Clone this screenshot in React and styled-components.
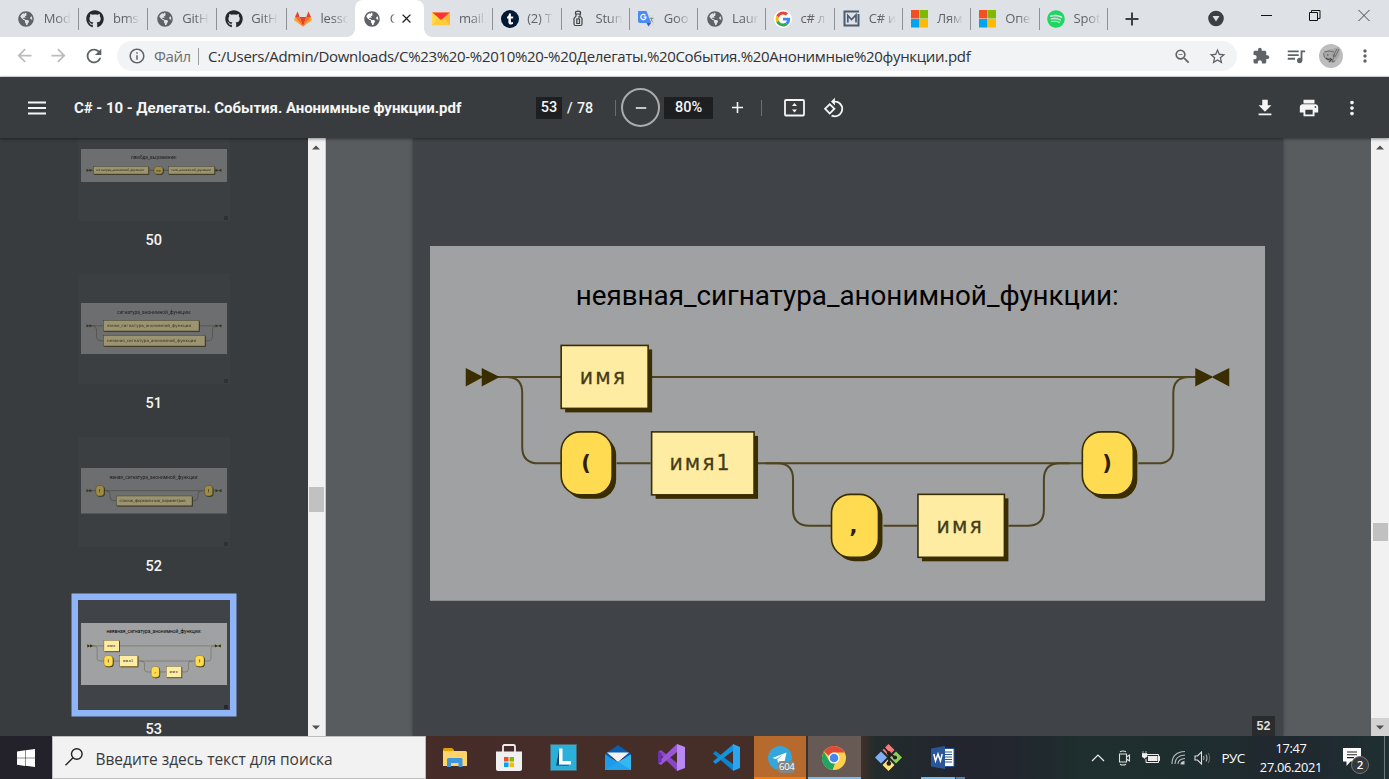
import React from 'react';
import styled, { createGlobalStyle, css } from 'styled-components';
import {
  MdArrowBack, MdArrowForward, MdRefresh, MdInfoOutline, MdZoomOut, MdStarBorder,
  MdExtension, MdQueueMusic, MdMoreVert, MdRemove, MdAdd, MdRotate90DegreesCcw,
  MdFileDownload, MdPrint, MdClose,
} from 'react-icons/md';
import { FaGithub, FaSpotify, FaGlobeAmericas } from 'react-icons/fa';

const Global = createGlobalStyle`
  * { box-sizing: border-box; }
  body { margin: 0; overflow: hidden; }
  svg { display: block; flex: none; }
`;

const ui = `'Open Sans', 'Noto Sans', sans-serif`;
const roboto = `Roboto, 'Noto Sans', sans-serif`;

const Screen = styled.div`
  width: 1389px; height: 779px; display: flex; flex-direction: column;
  overflow: hidden; font-family: ${ui}; white-space: nowrap;
`;

/* ---------- tab strip ---------- */
const TabStrip = styled.div`
  height: 37px; flex: none; display: flex; align-items: stretch;
  background: #dee1e6; padding-left: 9.2px;
`;
const Tab = styled.div`
  width: ${p => p.$w}px; flex: none; position: relative; display: flex; align-items: center;
  padding-left: 8px; color: #5f6368; font-size: 13px; letter-spacing: -0.2px;
  ${p => !p.$active && !p.$last && css`
    &::after { content: ''; position: absolute; right: -0.6px; top: 8px; width: 1px; height: 22px; background: #8d9094; }
  `}
  ${p => p.$active && css`
    background: #fff; border-radius: 8px 8px 0 0;
    &::before, &::after { content: ''; position: absolute; bottom: 0; width: 8px; height: 8px; }
    &::before { left: -8px; background: radial-gradient(circle at 0 0, transparent 7.5px, #fff 8px); }
    &::after { right: -8px; background: radial-gradient(circle at 100% 0, transparent 7.5px, #fff 8px); }
  `}
`;
const Favicon = styled.div`
  width: 18px; height: 18px; flex: none; display: flex; align-items: center; justify-content: center; margin-top: 0.5px;
`;
const TabTitle = styled.span`
  margin-left: 8.6px; width: ${p => p.$w || 27}px; overflow: hidden; line-height: 20px; margin-top: -1px;
  -webkit-mask-image: linear-gradient(90deg, #000 45%, transparent);
  mask-image: linear-gradient(90deg, #000 45%, transparent);
`;
const TabClose = styled.span`margin-left: 4px; color: #202124;`;
const StripPlus = styled.div`margin: 0 0 0 18px; display: flex; align-items: center;`;
const StripEnd = styled.div`
  margin-left: auto; display: flex; align-items: flex-start; padding: 7px 19px 0 0; gap: 37px;
`;

const Globe = () => <FaGlobeAmericas size={16} color="#5f6368" />;
const GitLab = () => (
  <svg width="18" height="18" viewBox="0 0 18 18">
    <path d="M9 16.800 12.300 7H5.700z" fill="#e24329" /><path d="M9 16.800 5.700 7H1z" fill="#fc6d26" />
    <path d="M9 16.800 12.300 7H17z" fill="#fc6d26" /><path d="M1 7 .2 10.200 9 16.800z" fill="#fca326" />
    <path d="M17 7l.8 3.200L9 16.800z" fill="#fca326" /><path d="M1 7 3.600 1.400 5.700 7z" fill="#e24329" />
    <path d="M17 7l-2.600-5.600L12.300 7z" fill="#e24329" />
  </svg>
);
const YandexMail = () => (
  <svg width="18" height="14" viewBox="0 0 18 14">
    <path d="M0 .5h18v12.800H0z" fill="#ffcc3d" /><path d="M0 .5 9 8l9-7.500z" fill="#f33" />
    <path d="M0 .5v12.800L6 5.400z" fill="#ffdb4d" /><path d="M18 .5v12.800L12 5.400z" fill="#fcb632" />
  </svg>
);
const Tumblr = () => (
  <svg width="18" height="18" viewBox="0 0 18 18">
    <circle cx="9" cy="9" r="9" fill="#001935" />
    <path d="M9.900 3.600v3h2.300v2H9.900v2.700c0 1 .7 1.400 2.100.8v2c-2.600 1-4.600.1-4.600-2.200V8.600H6V6.900c1.200-.4 1.800-1.500 2-3.300z" fill="#fff" />
  </svg>
);
const Bottle = () => (
  <svg width="14" height="18" viewBox="0 0 14 18" fill="none" stroke="#444" strokeWidth="1.200">
    <path d="M4.500 4V2.200Q4.500 1.200 7 1.200t2.500 1V4zM5 4.500v1.500L3 8.500V14q0 1.500 1.500 1.500h5Q11 15.500 11 14V8.500L9 6V4.500" />
    <path d="M8 6v3H5.800v4.500h2.700V9" />
  </svg>
);
const Translate = () => (
  <svg width="18" height="18" viewBox="0 0 18 18">
    <path d="M7 5h9a1 1 0 0 1 1 1v9a1 1 0 0 1-1 1h-6z" fill="#dcdcdc" />
    <path d="M1.500 1h8l4.500 12H3a2 2 0 0 1-2-2V1.500z" fill="#4a8af4" />
    <path d="M9.500 13H14l-2.500 3.500z" fill="#3a5bc7" />
    <path d="M8.400 5.300A2.600 2.600 0 1 0 9 7.200H6.500" fill="none" stroke="#fff" strokeWidth="1.200" />
    <path d="M12.500 8.500h4M14.300 7.500c1 2-.3 4-1.300 4.500M14 10l2.200 2" fill="none" stroke="#7c8a91" strokeWidth=".9" />
  </svg>
);
const Google = () => (
  <svg width="18" height="18" viewBox="-5 -5 58 58">
    <circle cx="24" cy="24" r="29" fill="#fff" />
    <path fill="#EA4335" d="M24 9.500c3.500 0 6.700 1.200 9.200 3.600l6.900-6.900C35.900 2.400 30.500 0 24 0 14.600 0 6.500 5.400 2.600 13.200l8 6.200C12.400 13.700 17.700 9.500 24 9.500z" />
    <path fill="#4285F4" d="M47 24.600c0-1.600-.2-3.100-.4-4.600H24v9h12.900c-.6 3-2.300 5.500-4.800 7.200l7.700 6C44.400 38 47 31.800 47 24.600z" />
    <path fill="#FBBC05" d="M10.500 28.600a14.500 14.500 0 0 1 0-9.200l-8-6.200a24 24 0 0 0 0 21.600z" />
    <path fill="#34A853" d="M24 48c6.500 0 11.900-2.100 15.900-5.800l-7.700-6c-2.200 1.500-4.900 2.300-8.200 2.300-6.300 0-11.600-4.200-13.500-9.900l-8 6.200C6.500 42.600 14.600 48 24 48z" />
  </svg>
);
const Metanit = () => (
  <svg width="17" height="17" viewBox="0 0 17 17" fill="none" stroke="#4b5d70" strokeWidth="2">
    <path d="M16 1.500H1.500v14h14V4" /><path d="M4.800 12.500V5.500l3.700 4 4.500-4.700v7.700" strokeWidth="1.700" />
  </svg>
);
const Microsoft = ({ size = 17.500 }) => (
  <svg width={size} height={size} viewBox="0 0 17 17">
    <path d="M0 0h8.200v8.200H0z" fill="#f25022" /><path d="M8.800 0H17v8.200H8.800z" fill="#7fba00" />
    <path d="M0 8.800h8.200V17H0z" fill="#00a4ef" /><path d="M8.800 8.800H17V17H8.800z" fill="#ffb900" />
  </svg>
);

const tabs = [
  { t: 'Mod', i: <Globe /> }, { t: 'bmst', i: <FaGithub size={18} color="#24292e" /> },
  { t: 'GitH', i: <Globe /> }, { t: 'GitH', i: <FaGithub size={18} color="#24292e" /> },
  { t: 'lesso', i: <GitLab /> }, { t: 'C', i: <Globe />, active: true },
  { t: 'mail.', i: <YandexMail /> }, { t: '(2) T', i: <Tumblr /> }, { t: 'Stun', i: <Bottle /> },
  { t: 'Goo', i: <Translate /> }, { t: 'Laun', i: <Globe /> }, { t: 'c# л', i: <Google /> },
  { t: 'C# и', i: <Metanit /> }, { t: 'Лям', i: <Microsoft /> }, { t: 'Опе', i: <Microsoft /> },
  { t: 'Spot', i: <FaSpotify size={18} color="#1ed760" /> },
];

/* ---------- address bar ---------- */
const AddressRow = styled.div`
  height: 40px; flex: none; display: flex; align-items: center; background: #fff;
  border-bottom: 1.500px solid #dadce0; padding: 0 14px 1px 13.500px; color: #5f6368;
`;
const NavButtons = styled.div`display: flex; gap: 13.500px; width: 103.500px;`;
const Dim = styled.span`color: #babcbe; display: flex;`;
const Omnibox = styled.div`
  width: 1120px; height: 30px; border-radius: 15px; background: #f1f3f4;
  display: flex; align-items: center; padding: 0 10px 0 11px;
`;
const Scheme = styled.span`margin-left: 8px; font-size: 15px; width: 44px; letter-spacing: -0.450px; color: #6b6f73;`;
const Bar = styled.span`width: 1px; height: ${p => p.$h}px; background: ${p => p.$c};`;
const Url = styled.span`margin-left: 9px; font-size: 15px; letter-spacing: -0.316px; color: #303236;`;
const OmniEnd = styled.div`margin-left: auto; display: flex; gap: 16px; align-items: center;`;
const Extensions = styled.div`margin-left: auto; display: flex; align-items: center;`;
const Gap = styled.span`width: ${p => p.$w}px; flex: none;`;

/* ---------- viewer header ---------- */
const PdfHeader = styled.div`
  height: 61px; flex: none; display: flex; align-items: center; background: #383c3e;
  color: #f5f5f5; font-family: ${roboto}; padding: 0 26px 0 26px; z-index: 2;
  box-shadow: 0 1px 3px rgba(0,0,0,.45);
`;
const DocTitle = styled.div`
  margin-left: 26px; width: 462px; font-size: 15px; font-weight: 700; letter-spacing: -0.030px;
`;
const Field = styled.div`
  width: ${p => p.$w}px; height: 22px; background: #1d1f21; font-size: 14.500px; font-weight: 500;
  display: flex; align-items: center; justify-content: center;
`;
const Total = styled.span`margin-left: 5px; width: 48px; font-size: 14.300px; word-spacing: 1px; letter-spacing: -0.100px; font-weight: 500;`;
const ZoomOut = styled.div`
  width: 39px; height: 39px; border: 2px solid #a9abac; border-radius: 50%; margin: 0 4px 0 5px;
  display: flex; align-items: center; justify-content: center;
`;
const HeaderEnd = styled.div`margin-left: auto; display: flex; align-items: center; gap: 21.500px;`;

/* ---------- body ---------- */
const Body = styled.div`height: 598px; flex: none; display: flex; overflow: hidden;`;
const Sidebar = styled.div`width: 307.500px; background: #383c3e; overflow: hidden;`;
const ThumbList = styled.div`display: flex; flex-direction: column; align-items: center; margin-top: -27.500px;`;
const Thumb = styled.div`height: 163px; flex: none; display: flex; flex-direction: column; align-items: center;`;
const ThumbPage = styled.div`
  width: 152px; height: 110.500px; flex: none; position: relative; background: #404347; padding: ${p => p.$top}px 3px 0;
  opacity: ${p => (p.$on ? 1 : 0.5)};
  ${p => p.$on && css`box-shadow: 0 0 0 6.500px #8fb4f8;`}
`;
const ThumbMark = styled.div`position: absolute; right: 1.500px; bottom: 1.500px; width: 4.500px; height: 4px; background: #26282a;`;
const ThumbLabel = styled.div`margin-top: 10px; font: 500 14.500px/19px ${roboto}; color: #f5f5f5;`;

const Track = styled.div`
  width: 18px; flex: none; background: #f1f1f1; display: flex; flex-direction: column; align-items: center;
  border: solid #c9c9c9; border-width: 0 ${p => (p.$edge ? 1 : 0)}px 0 0;
`;
const ScrollButton = styled.div`
  width: 100%; height: 18px; display: flex; align-items: center; justify-content: center;
  background: ${p => (p.$hot ? '#d2d2d2' : 'transparent')};
`;
const ScrollThumb = styled.div`
  width: 15px; height: ${p => p.$h}px; margin: ${p => p.$y}px 0 auto; background: #c1c1c1;
`;
const Arrow = ({ up }) => (
  <svg width="8" height="5" viewBox="0 0 8 5"><path d={up ? 'M0 4.500 4 .5l4 4z' : 'M0 .5l4 4 4-4z'} fill="#505050" /></svg>
);

const Canvas = styled.div`flex: 1; background: #595c5e; display: flex; justify-content: center; align-items: flex-start; padding-right: 0.500px;`;
const Sheet = styled.div`
  width: 870px; height: 598px; background: #404347; position: relative; padding: 108px 0 0 17px;
  box-shadow: 0 0 3px rgba(40,42,44,.7);
`;
const PageBadge = styled.div`
  position: absolute; right: 8px; bottom: 0; width: 23px; height: 20px; background: #292b2d; color: #ddd;
  font: 700 12.500px/20px 'Liberation Sans', Arial, sans-serif; text-align: center;
`;

/* ---------- railroad diagrams ---------- */
const INK = '#3a2e00';
const Node = ({ x, y, w, h, d = 4, s = 1.600, r = 0, bold, children, tx, ty, tw, fs = 21 }) => (
  <g>
    <rect x={x + d} y={y + d} width={w} height={h} rx={r} fill={INK} />
    <rect x={x} y={y} width={w} height={h} rx={r} fill={r ? '#ffdb52' : '#ffeca3'} stroke={INK} strokeWidth={s} />
    <text x={tx} y={ty} fontSize={fs} fontFamily="'DejaVu Sans', sans-serif" fontWeight={bold ? 700 : 400}
      fill={bold ? '#2b2200' : '#453c18'} stroke={bold ? 'none' : '#453c18'} strokeWidth={fs / 70}
      textLength={tw} lengthAdjust="spacing">{children}</text>
  </g>
);
const Title = ({ x, y, w, fs, children }) => (
  <text x={x} y={y} fontSize={fs} fontFamily={roboto} fill="#000" textLength={w} lengthAdjust="spacingAndGlyphs">{children}</text>
);

const ImplicitSignature = ({ width = 835 }) => (
  <svg width={width} height={width * 355 / 835} viewBox="430.500 246 834.500 355">
    <rect x="430" y="246" width="836" height="355" fill="#a0a1a3" />
    <Title x={576} y={305} w={543.500} fs={28}>неявная_сигнатура_анонимной_функции:</Title>
    <g fill="none" stroke="#4f4420" strokeWidth="2">
      <path d="M483 377H1213M617 463.500h34M758 463.500h326M1139 463.500h19q16 0 16-16V393q0-16 16-16h8M499 377h8q15.500 0 15.500 16v54q0 16.500 17 16.500H562" />
      <path d="M766 463.500h12q15.500 0 15.500 16V510q0 16 16.500 16h22M884 526h34M1009 526h19q16.500 0 16.500-16v-30q0-16.500 16-16.500h10" />
    </g>
    <g fill={INK}>
      <path d="M466 368v18.500l17.500-9.500zM482 368v18.500l18-9.500zM1196 368v18.500l18-9.500zM1230 368v18.500l-18-9.500z" />
    </g>
    <Node x={561.500} y={345.500} w={87} h={63} fs={20.500} tx={580} ty={384} tw={45.500}>имя</Node>
    <Node x={561.500} y={432} w={51} h={63} r={19} bold tx={581.500} ty={470} tw={10}>(</Node>
    <Node x={652} y={432} w={102.500} h={63} fs={20.500} tx={670} ty={470} tw={60}>имя1</Node>
    <Node x={832} y={494.500} w={47} h={63} r={19} bold tx={850} ty={533} tw={9}>,</Node>
    <Node x={918.500} y={494.500} w={86.500} h={63} fs={20.500} tx={937} ty={533} tw={45.500}>имя</Node>
    <Node x={1083} y={432} w={51} h={63} r={19} bold tx={1103} ty={470} tw={10}>)</Node>
  </svg>
);

const small = { d: 0.800, s: 0.400, fs: 4 };
const Ends = ({ y }) => (
  <path fill={INK} d={`M5.500 ${y - 1.600}v3.200l3-1.600zM8.500 ${y - 1.600}v3.200l3-1.600zM134.500 ${y - 1.600}v3.200l3-1.600zM140.500 ${y - 1.600}v3.200l-3-1.600z`} />
);
const Lambda = () => (
  <svg width="146" height="33" viewBox="0 0 146 33">
    <rect width="146" height="33" fill="#a0a1a3" />
    <Title x={50} y={10} w={46} fs={4.800}>лямбда_выражение:</Title>
    <path d="M8 21.300h130" stroke="#4f4420" strokeWidth=".6" /><Ends y={21.300} />
    <Node {...small} fs={3.200} x={12.500} y={17.500} w={55} h={7.500} tx={15} ty={22.300} tw={48}>сигнатура_анонимной_функции</Node>
    <Node {...small} fs={3.400} x={73} y={17.500} w={9} h={7.500} r={2.800} bold tx={74.700} ty={22.600} tw={5.500}>=&gt;</Node>
    <Node {...small} fs={3.200} x={87.500} y={17.500} w={46} h={7.500} tx={90} ty={22.300} tw={40}>тело_анонимной_функции</Node>
  </svg>
);
const Signature = () => (
  <svg width="146" height="51.500" viewBox="0 0 146 51.500">
    <rect width="146" height="51.500" fill="#a0a1a3" />
    <Title x={36} y={10.500} w={74} fs={4.800}>сигнатура_анонимной_функции:</Title>
    <path d="M8 22.800h130M11.500 22.800q4 0 4 4V34q0 3.800 4 3.800h108q4 0 4-4V26.800q0-4 4-4" fill="none" stroke="#4f4420" strokeWidth=".5" />
    <Ends y={22.800} />
    <Node {...small} x={22.500} y={17.500} w={95.500} h={10.500} tx={26} ty={24} tw={84}>явная_сигнатура_анонимной_функции</Node>
    <Node {...small} x={22.500} y={32.500} w={101.500} h={10.500} tx={26} ty={39.200} tw={89}>неявная_сигнатура_анонимной_функции</Node>
  </svg>
);
const ExplicitSignature = () => (
  <svg width="146" height="45.500" viewBox="0 0 146 45.500">
    <rect width="146" height="45.500" fill="#a0a1a3" />
    <Title x={28.500} y={10.500} w={89} fs={4.800}>явная_сигнатура_анонимной_функции:</Title>
    <path d="M8 22.700h130M24 22.700h1q4 0 4 4v2q0 4 4 4h80q4 0 4-4v-2q0-4 4-4" fill="none" stroke="#4f4420" strokeWidth=".5" />
    <Ends y={22.700} />
    <Node {...small} x={14.800} y={17.500} w={8.200} h={10.500} r={3} bold tx={17.800} ty={24.200} tw={2.200}>(</Node>
    <Node {...small} x={123.500} y={17.500} w={8.200} h={10.500} r={3} bold tx={126.500} ty={24.200} tw={2.200}>)</Node>
    <Node {...small} x={35.500} y={28} w={75.500} h={9.800} tx={38.500} ty={34} tw={66}>список_формальных_параметров</Node>
  </svg>
);

const thumbs = [
  { n: 50, top: 38.500, art: <Lambda /> }, { n: 51, top: 29, art: <Signature /> },
  { n: 52, top: 31.500, art: <ExplicitSignature /> }, { n: 53, top: 23, art: <ImplicitSignature width={146} />, on: true },
];

/* ---------- taskbar ---------- */
const Taskbar = styled.div`
  height: 43px; flex: none; display: flex; align-items: stretch; color: #fff;
  background: linear-gradient(90deg, #23212a 0, #23212a 52px, #452c28 426px, #452e28 750px, #3d3029 862px, #232c2c 875px, #22252e 950px, #22262f 1010px, #1e2f2e 1090px, #1e2e30 1190px, #20282f 1290px, #1e3032 1389px);
`;
const Start = styled.div`width: 52px; display: flex; align-items: center; justify-content: center;`;
const Search = styled.div`
  width: 373.500px; background: #f2f2f2; border: solid #bdbdbd; border-width: 1px 1.500px 1px 1px; display: flex; align-items: center;
  padding-left: 12px; color: #3a3a3a; font-size: 15.500px; letter-spacing: -0.030px;
  span { margin-left: 12.500px; margin-top: 2px; }
  svg { margin-top: -2px; }
`;
const Apps = styled.div`display: flex; margin-left: 2.500px;`;
const AppButton = styled.div`
  width: 54.200px; display: flex; align-items: center; justify-content: center; position: relative;
  border: solid transparent; border-width: 0 1px; background-clip: padding-box;
  background-color: ${p => p.$bg || 'transparent'};
  ${p => p.$line && css`&::after { content: ''; position: absolute; bottom: 0; left: ${p.$inset || 0}px; right: ${p.$inset || 0}px; height: 2px; background: ${p.$line}; }`}
`;
const Count = styled.span`
  position: absolute; right: 11px; bottom: 6px; width: 17px; height: 12px; border-radius: 4px; background: #858585;
  font-size: 9.500px; line-height: 12px; text-align: center; letter-spacing: -0.300px;
`;
const Tray = styled.div`margin-left: auto; display: flex; align-items: center; padding-right: 4px;`;
const Lang = styled.span`margin-left: 11px; width: 24px; font-size: 13.500px; letter-spacing: -0.600px;`;
const Clock = styled.div`
  width: 66px; margin-left: 12.500px; text-align: center; font-size: 12.800px; line-height: 19.500px; letter-spacing: -0.300px; margin-top: 1px;
`;
const Notify = styled.div`position: relative; margin-left: 19px; width: 28px; height: 22px; padding-top: 1px;`;
const NotifyCount = styled.span`
  position: absolute; left: 8px; top: 9px; width: 18px; height: 18px; border-radius: 50%; background: #35393b; border: 1px solid #777;
  font-size: 11.500px; line-height: 16px; text-align: center; font-weight: 600;
`;

const Explorer = () => (
  <svg width="24" height="20" viewBox="0 0 24 20">
    <path d="M0 1.500Q0 0 1.500 0H9l2 2v3H0z" fill="#e3a008" /><path d="M0 3h22.500Q24 3 24 4.500V18H0z" fill="#ffd567" />
    <path d="M4 19v-7.500Q4 10 5.500 10h12.500Q19.500 10 19.500 11.500V19h-4v-4H8v4z" fill="#3f96dc" />
  </svg>
);
const Store = () => (
  <svg width="26" height="27" viewBox="0 0 26 27">
    <path d="M7 8V2.500Q7 1 8.500 1h9Q19 1 19 2.500V8" fill="none" stroke="#eee" strokeWidth="1.800" />
    <path d="M0 7.500h26V25q0 2-2 2H2q-2 0-2-2z" fill="#f0f0f0" />
    <path d="M8 13h4.500v4.500H8z" fill="#f25022" /><path d="M13.500 13H18v4.500h-4.500z" fill="#7fba00" />
    <path d="M8 18.500h4.500V23H8z" fill="#00a4ef" /><path d="M13.500 18.500H18V23h-4.500z" fill="#ffb900" />
  </svg>
);
const Lingvo = () => (
  <svg width="27" height="27" viewBox="0 0 27 27">
    <path d="M.5.5h26v26H.5z" fill="#2bb0dc" stroke="#4a6a72" />
    <path d="M9 5v15.500L6 22q2-8 3-17z" fill="#123a6b" /><path d="M6 22l3-1.500h11L18 22z" fill="#1c6ea3" />
    <path d="M9 4.500h3.500V17H21v3.500H9z" fill="#fff" />
  </svg>
);
const Mail = () => (
  <svg width="26" height="25" viewBox="0 0 26 25">
    <path d="M0 9 13 0l13 9v3H0z" fill="#0a5fb0" /><path d="M2 7.500h22L13 17z" fill="#f3f3f3" />
    <path d="M0 9.500 13 17l13-7.500V25H0z" fill="#1e9be8" /><path d="M13 17l13-7.500V25z" fill="#35b8f1" /><path d="M13 17l13 8H0z" fill="#28a8ee" opacity=".6" />
  </svg>
);
const VisualStudio = () => (
  <svg width="27" height="27" viewBox="0 0 27 27">
    <path d="M19 0l8 3v21l-8 3z" fill="#b888f5" /><path d="M.5 7.500 3 6l16 13v8L1 9z" fill="#8a45c9" />
    <path d="M.5 19.500 3 21 19 8V0L1 17z" fill="#9b56d8" /><path d="M0 7.500 3.500 9v9L0 19.500z" fill="#6d31a8" />
  </svg>
);
const VSCode = () => (
  <svg width="27" height="27" viewBox="0 0 27 27">
    <path d="M0 9.500 2.500 7l18 13.500V27z" fill="#0d84cf" /><path d="M0 17.500 2.500 20l18-13.500V0z" fill="#1493dd" />
    <path d="M20 0l7 3v21l-7 3z" fill="#2ba5f2" />
  </svg>
);
const Telegram = () => (
  <svg width="24" height="24" viewBox="0 0 24 24">
    <circle cx="12" cy="12" r="12" fill="#33a6dc" /><path d="M4.500 12 18.500 6.500 16 18l-4-3-2 2-.6-3.700L15.500 8.500 8 13z" fill="#fff" />
  </svg>
);
const Chrome = () => (
  <svg width="24" height="24" viewBox="0 0 24 24">
    <circle cx="12" cy="12" r="12" fill="#ffd04a" />
    <path d="M12 0a12 12 0 0 1 10.500 6.500H12a5.500 5.500 0 0 0-5 3.500L2 5.500A12 12 0 0 1 12 0z" fill="#e04a3a" />
    <path d="M1.800 5.700 7 14.500A5.500 5.500 0 0 0 13 17.400L10.600 24A12 12 0 0 1 1.800 5.700z" fill="#1fa463" />
    <circle cx="12" cy="12" r="5.500" fill="#fff" /><circle cx="12" cy="12" r="4.300" fill="#4587f0" />
  </svg>
);
const Git = () => (
  <svg width="27" height="27" viewBox="0 0 27 27">
    <path d="M13.500 0l6 6-6 6-6-6z" fill="#f27c7c" /><path d="M21 7.500l6 6-6 6-6-6z" fill="#8fd05c" />
    <path d="M6 7.500l6 6-6 6-6-6z" fill="#82aef5" /><path d="M13.500 15l6 6-6 6-6-6z" fill="#fde37c" />
    <path d="M8.500 3 14 9v12M13.500 8.500l6.500 5" stroke="#231f1d" strokeWidth="1.800" fill="none" />
    <circle cx="13.800" cy="9" r="2" fill="#231f1d" /><circle cx="20" cy="13.500" r="2.100" fill="#231f1d" /><circle cx="13.800" cy="19.500" r="2.300" fill="#231f1d" />
  </svg>
);
const Word = () => (
  <svg width="24" height="23" viewBox="0 0 24 23">
    <path d="M12 2.500h11v18H12z" fill="#fff" stroke="#2a5699" />
    <path d="M14 6h7M14 8.500h7M14 11h7M14 13.500h7M14 16h7" stroke="#2a5699" strokeWidth="1.200" />
    <path d="M0 2.500 14 0v23L0 20.500z" fill="#2a5699" />
    <path d="M2.800 8l1.700 7L7 8l2.400 7 1.800-7" stroke="#fff" strokeWidth="1.500" fill="none" />
  </svg>
);

export default function App() {
  return (
    <Screen>
      <Global />
      <TabStrip>
        {tabs.map((t, i) => (
          <Tab key={i} $w={i < 6 ? 69.200 : 68.300} $active={t.active} $last={i === 4}>
            <Favicon>{t.i}</Favicon>
            <TabTitle $w={t.active ? 5 : 27}>{t.t}</TabTitle>
            {t.active && <TabClose><MdClose size={15} /></TabClose>}
          </Tab>
        ))}
        <StripPlus>
          <svg width="14" height="14" viewBox="0 0 14 14"><path d="M7 .5v13M.5 7h13" stroke="#3c4043" strokeWidth="2" /></svg>
        </StripPlus>
        <StripEnd>
          <svg width="16" height="24" viewBox="0 0 16 24">
            <circle cx="8" cy="11.500" r="7.800" fill="#3c4043" /><path d="M4.500 9h7L8 14.500z" fill="#dee1e6" />
          </svg>
          <svg width="11" height="18" viewBox="0 0 11 18"><path d="M0 8.500h11" stroke="#111" /></svg>
          <svg width="12" height="18" viewBox="0 0 12 18" fill="none" stroke="#111">
            <path d="M.5 5.500h8v8h-8zM2.500 5.500v-2h8.500v8h-2" />
          </svg>
          <svg width="12" height="18" viewBox="0 0 12 18"><path d="M.5 3l11 11M11.500 3l-11 11" stroke="#444" /></svg>
        </StripEnd>
      </TabStrip>

      <AddressRow>
        <NavButtons>
          <Dim><MdArrowBack size={21} /></Dim><Dim><MdArrowForward size={21} /></Dim><MdRefresh size={22} />
        </NavButtons>
        <Omnibox>
          <MdInfoOutline size={18} />
          <Scheme>Файл</Scheme><Bar $h={17} $c="#9a9da1" />
          <Url>C:/Users/Admin/Downloads/C%23%20-%2010%20-%20Делегаты.%20События.%20Анонимные%20функции.pdf</Url>
          <OmniEnd><MdZoomOut size={19} /><MdStarBorder size={19} /></OmniEnd>
        </Omnibox>
        <Extensions>
          <MdExtension size={18} /><Gap $w={15} /><MdQueueMusic size={22} /><Gap $w={12.500} />
          <svg width="24" height="24" viewBox="0 0 24 24">
            <circle cx="12" cy="12" r="12" fill="#bdbdbd" />
            <path d="M5 9q3-4 9-4l2-1 4-1q2 7-1 11l-4 5-5-1-5-5z" fill="#a8a8a8" />
            <path d="M5 8q5-2 10 0M4.500 9q0 5 3 6M14 10q2 3-1 8l3-1M16 13l4-8M18 5q-3 4-3 8" stroke="#666" strokeWidth=".9" fill="none" />
            <path d="M7 14l2 1.500 3-1M10 18l3-3M8 11h1.500" stroke="#444" strokeWidth="1.200" fill="none" />
          </svg>
          <Gap $w={12} /><MdMoreVert size={20} />
        </Extensions>
      </AddressRow>

      <PdfHeader>
        <svg width="22" height="14" viewBox="0 0 22 14"><path d="M2 1.500h18M2 7h18M2 12.500h18" stroke="#f5f5f5" strokeWidth="2" /></svg>
        <DocTitle>C# - 10 - Делегаты. События. Анонимные функции.pdf</DocTitle>
        <Field $w={26}>53</Field><Total>/ 78</Total>
        <Bar $h={16} $c="#6b6e70" />
        <ZoomOut><MdRemove size={18} /></ZoomOut>
        <Field $w={49}>80%</Field>
        <Gap $w={15} /><MdAdd size={19} /><Gap $w={14} />
        <Bar $h={16} $c="#6b6e70" /><Gap $w={22} />
        <svg width="21" height="18" viewBox="0 0 21 18">
          <rect x="1" y="1" width="19" height="15.500" rx="1" fill="none" stroke="#f5f5f5" strokeWidth="1.800" />
          <path d="M10.500 4l2.500 3h-5zM10.500 13.500l2.500-3h-5z" fill="#f5f5f5" />
        </svg>
        <Gap $w={17.500} /><MdRotate90DegreesCcw size={22} />
        <HeaderEnd><MdFileDownload size={22} /><MdPrint size={22} /><MdMoreVert size={22} /></HeaderEnd>
      </PdfHeader>

      <Body>
        <Sidebar>
          <ThumbList>
            {thumbs.map(t => (
              <Thumb key={t.n}>
                <ThumbPage $top={t.top} $on={t.on}>{t.art}<ThumbMark /></ThumbPage>
                <ThumbLabel>{t.n}</ThumbLabel>
              </Thumb>
            ))}
          </ThumbList>
        </Sidebar>
        <Track $edge>
          <ScrollButton><Arrow up /></ScrollButton><ScrollThumb $y={331} $h={25} /><ScrollButton><Arrow /></ScrollButton>
        </Track>
        <Canvas>
          <Sheet><ImplicitSignature width={834.500} /><PageBadge>52</PageBadge></Sheet>
        </Canvas>
        <Track>
          <ScrollButton><Arrow up /></ScrollButton><ScrollThumb $y={367} $h={18} /><ScrollButton $hot><Arrow /></ScrollButton>
        </Track>
      </Body>

      <Taskbar>
        <Start>
          <svg width="18" height="18" viewBox="0 0 18 18"><path d="M0 2.500 8 1.300v7.500H0zM8.500 1.200 18 0v8.800H8.500zM0 9.300h8V17l-8-1.200zM8.500 9.300H18V18l-9.500-1.200z" fill="#fff" /></svg>
        </Start>
        <Search>
          <svg width="18" height="18" viewBox="0 0 18 18" fill="none" stroke="#222" strokeWidth="1.400"><circle cx="11.800" cy="6" r="5.300" /><path d="M8 9.800.5 17.300" /></svg>
          <span>Введите здесь текст для поиска</span>
        </Search>
        <Apps>
          <AppButton><Explorer /></AppButton>
          <AppButton><Store /></AppButton>
          <AppButton><Lingvo /></AppButton>
          <AppButton><Mail /></AppButton>
          <AppButton><VisualStudio /></AppButton>
          <AppButton><VSCode /></AppButton>
          <AppButton $bg="#b66a2d" $line="#ff7b00"><Telegram /><Count>604</Count></AppButton>
          <AppButton $bg="#675a54" $line="#76b9ed"><Chrome /></AppButton>
          <AppButton><Git /></AppButton>
          <AppButton $line="linear-gradient(90deg, #76b9ed 34px, #2d3a48 34px, #2d3a48 35px, #5683a6 35px)" $inset={4}><Word /></AppButton>
        </Apps>
        <Tray>
          <svg width="14" height="8" viewBox="0 0 14 8"><path d="M1 7l6-6 6 6" fill="none" stroke="#eee" strokeWidth="1.200" /></svg>
          <Gap $w={13.500} />
          <svg width="13" height="16" viewBox="0 0 13 16" fill="none" stroke="#ddd" strokeWidth="1.100">
            <path d="M1.500 4h7v8h-7zM8.500 7l3-2v6l-3-2M2 1.800q3-1.600 6 0M2 14.200q3 1.600 6 0" />
          </svg>
          <Gap $w={10.500} />
          <svg width="18" height="13" viewBox="0 0 18 13">
            <path d="M5 3.500h11.500v8H4V8" fill="none" stroke="#eee" /><path d="M6 5h9.500v5H6z" fill="#eee" />
            <path d="M17 5.500h1v4h-1zM0 2.500h5V6H4L2.500 7.500 1 6H0zM1 0v3M4 0v3" fill="#eee" stroke="#eee" strokeWidth=".6" />
          </svg>
          <Gap $w={11} />
          <svg width="15" height="15" viewBox="0 0 15 15" fill="none" stroke="#b5baba" strokeWidth="1.100">
            <path d="M1 14Q1 2 14 1.500M4 14Q4 5.500 14 5M7 14Q7 9 14 8.500" /><path d="M10 14q0-2 3-2.500v2.500z" fill="#fff" />
          </svg>
          <Gap $w={8} />
          <svg width="17" height="14" viewBox="0 0 17 14" fill="none" stroke="#ddd" strokeWidth="1.100">
            <path d="M1 5h2.500L7.500 1v12L3.500 9H1z" /><path d="M9.500 5q1.200 2 0 4M12 3.500q2 3.500 0 7" stroke="#aaa" /><path d="M14.300 2q2.700 5 0 10" stroke="#666" />
          </svg>
          <Lang>РУС</Lang>
          <Clock>17:47<br />27.06.2021</Clock>
          <Notify>
            <svg width="18" height="18" viewBox="0 0 18 18"><path d="M0 0h18v13.500H7.500L3.500 18v-4.500H0z" fill="#fff" /><path d="M4 4h10M4 6.800h10M4 9.600h7" stroke="#222" strokeWidth="1.100" /></svg>
            <NotifyCount>2</NotifyCount>
          </Notify>
          <Gap $w={13} /><Bar $h={43} $c="#6d7879" />
        </Tray>
      </Taskbar>
    </Screen>
  );
}
